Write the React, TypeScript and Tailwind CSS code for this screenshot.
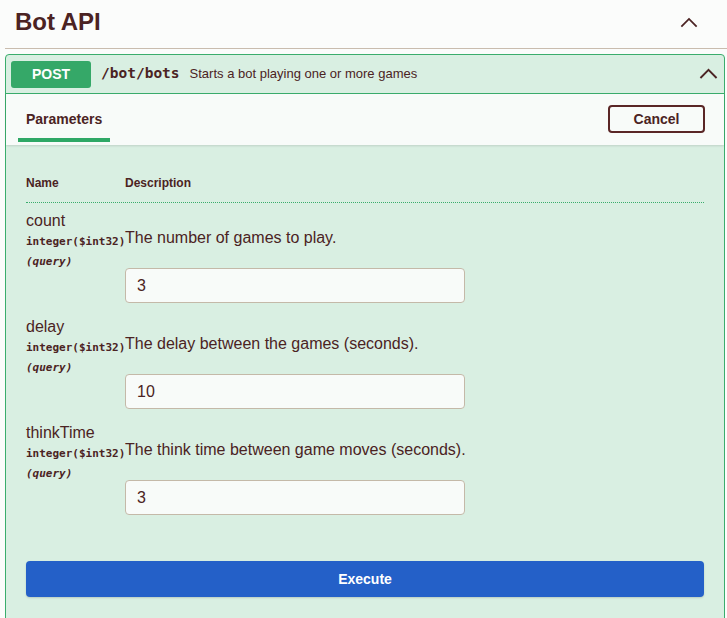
import React from "react";

const C = "#4b2323";

function Chevron({ w = 18 }: { w?: number }) {
  return (
    <svg width={w} height={w / 2 + 2} viewBox="0 0 20 11" fill="none">
      <polyline points="1.5,10 10,1.5 18.5,10" stroke={C} strokeWidth="2" />
    </svg>
  );
}

const rows = [
  { name: "count", desc: "The number of games to play.", value: "3" },
  { name: "delay", desc: "The delay between the games (seconds).", value: "10" },
  { name: "thinkTime", desc: "The think time between game moves (seconds).", value: "3" },
];

export default function App() {
  return (
    <div className="min-h-screen bg-[#fbfcfb] font-['Liberation_Sans',Arial,sans-serif] text-[#4b2323]">
      <div className="pl-[5px]">
        <div className="flex h-[49px] items-center justify-between border-b border-[#c9bcae] pb-[4px] pl-[10px] pr-[29px]">
          <div className="text-[24px] font-bold leading-[28px]">Bot API</div>
          <Chevron w={18} />
        </div>
        <div className="mr-[2px] mt-[5px] rounded-[4px] border border-[#3aad6c] bg-[#d9efe2]">
          <div className="flex h-[39px] items-center border-b border-[#3aad6c] pl-[5px] pr-[6px]">
            <div className="flex h-[27px] w-[80px] items-center justify-center rounded-[3px] bg-[#35a868] text-[14px] font-bold text-white">
              POST
            </div>
            <div className="ml-[10px] font-['DejaVu_Sans_Mono',monospace] text-[14.5px] font-bold">/bot/bots</div>
            <div className="ml-[10px] text-[13px]">Starts a bot playing one or more games</div>
            <div className="ml-auto">
              <Chevron w={19} />
            </div>
          </div>
          <div className="flex h-[51px] items-start justify-between bg-[#f8fbf9] pl-[12px] pr-[19px] shadow-[0_1px_2px_rgba(0,0,0,0.12)]">
            <div className="flex flex-col pt-[16px]">
              <div className="px-[8px] text-[14px] font-bold leading-[18px]">Parameters</div>
              <div className="mt-[10px] h-[4px] w-[92px] bg-[#2fa866]" />
            </div>
            <button className="mt-[11px] h-[28px] w-[97px] rounded-[4px] border-2 border-[#5a2626] bg-transparent text-[14px] font-bold">
              Cancel
            </button>
          </div>
          <div className="px-[20px] pt-[30px]">
            <div className="flex border-b border-dotted border-[#3aad6c] pb-[11px] text-[12px] font-bold leading-[16px]">
              <div className="w-[99px]">Name</div>
              <div>Description</div>
            </div>
            {rows.map((r) => (
              <div key={r.name} className="flex pb-[6px] pt-[9px]">
                <div className="w-[99px]">
                  <div className="text-[16px] leading-[18px]">{r.name}</div>
                  <div className="mt-[2px] whitespace-nowrap font-['DejaVu_Sans_Mono',monospace] text-[11px] font-bold leading-[20px]">
                    integer($int32)
                  </div>
                  <div className="font-['DejaVu_Sans_Mono',monospace] text-[11px] font-semibold italic leading-[20px]">
                    (query)
                  </div>
                </div>
                <div className="pt-[17px]">
                  <div className="text-[16px] leading-[18px]">{r.desc}</div>
                  <div className="mt-[21px] flex h-[35px] w-[340px] items-center rounded-[4px] border border-[#c4b9a8] bg-[#f8fbf9] pl-[11px] text-[16px]">
                    {r.value}
                  </div>
                </div>
              </div>
            ))}
            <div className="mt-[40px] flex h-[36px] items-center justify-center rounded-[4px] bg-[#2460c8] text-[14px] font-bold text-white shadow-[0_1px_2px_rgba(0,0,0,0.15)]">
              Execute
            </div>
            <div className="h-[40px]" />
          </div>
        </div>
      </div>
    </div>
  );
}
